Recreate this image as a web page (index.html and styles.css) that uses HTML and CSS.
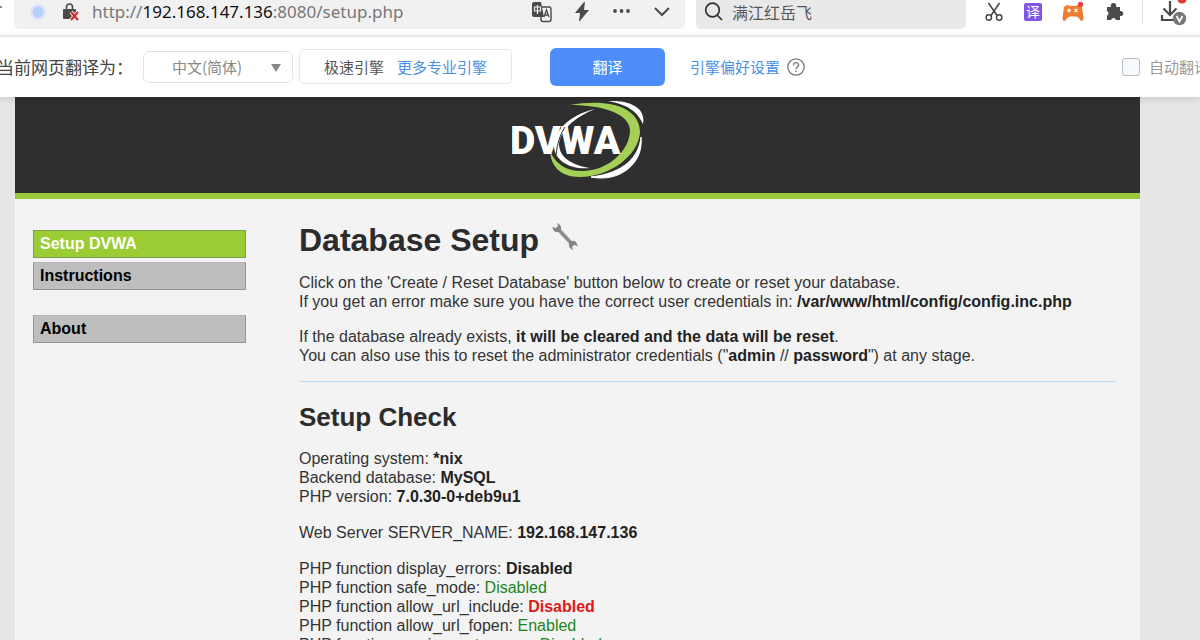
FILE: index.html
```html
<!DOCTYPE html>
<html lang="en">
<head>
    <meta charset="UTF-8">
    <meta name="viewport" content="width=device-width, initial-scale=1.0">
    <title>Setup :: Damn Vulnerable Web Application (DVWA)</title>
    <link rel="stylesheet" href="styles.css">
</head>
<body>
    <div class="toolbar">
        <svg class="edge-mark" width="3" height="28" viewBox="0 0 3 28"><path d="M0 7h2" stroke="#666" stroke-width="1.4"/></svg>
        <div class="address-bar">
            <svg width="18" height="18" viewBox="0 0 18 18"><circle cx="9" cy="9" r="8" fill="#dbe5f7"/><circle cx="9" cy="9" r="5.5" fill="#b5d0fb"/></svg>
            <svg class="lock" width="18" height="18" viewBox="0 0 18 18">
                <path d="M4.5 8V4a3 3 0 0 1 6 0v4" fill="none" stroke="#4a4a4a" stroke-width="1.6"/>
                <rect x="1" y="6" width="13" height="10" rx="1" fill="#4a4a4a"/>
                <path d="M9 9l7 8M16 9l-7 8" stroke="#f1f1f1" stroke-width="4"/>
                <path d="M9 9l7 8M16 9l-7 8" stroke="#d3302a" stroke-width="2.2"/>
            </svg>
            <div class="url">http://<span>192.168.147.136</span>:8080/setup.php</div>
            <div class="address-icons">
                <svg width="22" height="22" viewBox="0 0 22 22">
                    <rect x="10" y="6" width="10" height="14.5" rx="2" fill="none" stroke="#4a4a4a" stroke-width="1.4"/>
                    <path d="M3 1h7l3 15H3a2 2 0 0 1-2-2V3a2 2 0 0 1 2-2z" fill="#4a4a4a"/>
                    <path d="M3.5 6h6v4h-6zM6.5 4v9" fill="none" stroke="#f1f1f1" stroke-width="1.2"/>
                    <path d="M13 16l2.5-7 2.5 7M14 14h3" fill="none" stroke="#4a4a4a" stroke-width="1.3"/>
                </svg>
                <svg width="22" height="22" viewBox="0 0 22 22"><path d="M13 1L4 12h5L8 21l10-12h-5l1-8z" fill="#4a4a4a"/></svg>
                <svg width="22" height="22" viewBox="0 0 22 22" fill="#4a4a4a"><circle cx="4" cy="10" r="1.9"/><circle cx="10.5" cy="10" r="1.9"/><circle cx="17" cy="10" r="1.9"/></svg>
                <svg width="22" height="22" viewBox="0 0 22 22"><path d="M4 7l7 7 7-7" fill="none" stroke="#4a4a4a" stroke-width="2"/></svg>
            </div>
        </div>
        <div class="search-bar">
            <svg width="20" height="20" viewBox="0 0 20 20" fill="none" stroke="#333" stroke-width="1.7"><circle cx="8.5" cy="8" r="6.8"/><path d="M13 13l5 5"/></svg>
            <input type="text" value="满江红岳飞" aria-label="Search">
        </div>
        <div class="extensions">
            <svg width="20" height="20" viewBox="0 0 20 20" fill="none" stroke="#444" stroke-width="1.5"><path d="M4.5 1L13 13.5M15.5 1L7 13.5"/><circle cx="4.8" cy="15.500" r="2.7"/><circle cx="15.2" cy="15.5" r="2.7"/></svg>
            <span class="fanyi">译</span>
            <svg width="22" height="22" viewBox="0 0 22 22">
                <path d="M5 4q6 2 12 0l3 2 1.500 11q0 4-3 2.500-2-4-5-4H8.500q-3 0-5 4-3 1.500-3-2.500L2 6z" fill="#f07c31"/>
                <path d="M5 9.500h4M7 7.500v4M12.500 8l3 3M15.500 8l-3 3" stroke="#fff" stroke-width="1.3"/>
                <circle cx="18.5" cy="3.5" r="2.7" fill="#e8443c"/>
            </svg>
            <svg width="20" height="20" viewBox="0 0 20 20"><path d="M3 5h4a2.800 2.800 0 1 1 5 0h4v4a2.600 2.600 0 1 1 0 5v4h-4a2.600 2.600 0 0 0-5 0H3v-4.500a2.400 2.400 0 0 0-2-4.500h2z" fill="#4a4a4a"/></svg>
        </div>
        <svg class="download" width="30" height="28" viewBox="0 0 30 28">
            <circle cx="22" cy="-1" r="4.5" fill="#e03a3e"/>
            <path d="M10 1v14M3.500 8.500l6.500 6.500 6.500-6.500M2 15v5h13" fill="none" stroke="#4a4a4a" stroke-width="2.200"/>
            <circle cx="19.5" cy="18.5" r="6.7" fill="#777"/>
            <path d="M16.5 16l3 5.500 3-5.500" fill="none" stroke="#fff" stroke-width="1.7"/>
        </svg>
    </div>

    <div class="translate-bar">
        <label class="translate-label" for="lang">当前网页翻译为：</label>
        <div class="select-box">
            <select id="lang">
                <option>中文(简体)</option>
            </select>
        </div>
        <div class="engine">
            <span>极速引擎</span>
            <a href="#">更多专业引擎</a>
        </div>
        <button type="button" class="translate-btn">翻译</button>
        <a href="#" class="prefs">引擎偏好设置</a>
        <svg width="18" height="18" viewBox="0 0 18 18" fill="none" stroke="#777" stroke-width="1.3"><circle cx="9" cy="9" r="8.2"/><path d="M6.5 7.200a2.500 2.500 0 1 1 3.700 2.100q-1.200.7-1.200 1.900M9 12.500v1.500"/></svg>
        <div class="auto">
            <input type="checkbox" id="auto">
            <label for="auto">自动翻译</label>
        </div>
    </div>

    <div class="page">
        <div class="container">
            <div class="header">
                <svg width="132" height="80" viewBox="0 0 132 80">
                    <path d="M58 4C96-3 128 6 128 31C127 54 98 76 68 76C48 76 39 65 38 50C44 64 56 71 72 70C96 69 118 50 118 29C117 13 92 4 58 4z" fill="#a5d058"/>
                    <path d="M96 0C120-1 134 8 131 23C125 10 116 4 96 0z" fill="#fff"/>
                    <path d="M129 36C127 56 112 72 79 76C108 82 132 62 129 36z" fill="#fff" stroke="#fff"/>
                    <path d="M83 8C57 14 42 30 42 46C43 60 59 69 78 67C60 64 48 57 47 44C48 30 61 17 83 8z" fill="#fff"/>
                    <text x="-2" y="53" class="logo-text">DVWA</text>
                    <path d="M53 26Q46 36 44 54" fill="none" stroke="#2f2f2f"/>
                </svg>
            </div>
            <div class="content">
                <div class="menu">
                    <ul>
                        <li class="selected"><a href="#">Setup DVWA</a></li>
                        <li><a href="#">Instructions</a></li>
                    </ul>
                    <ul>
                        <li><a href="#">About</a></li>
                    </ul>
                </div>
                <div class="main">
                    <h1>Database Setup
                        <svg width="28" height="28" viewBox="0 0 28 28"><path d="M7 7l14 15" stroke="#8c8c8c" stroke-width="3.5"/><path d="M6 1q5 2 4 7-3 4-7 1L1 5l4 1 2-2zM22 28q-5-2-4-7 3-4 7-1l2 4-4-1-2 2z" fill="#858585"/></svg>
                    </h1>
                    <p>Click on the 'Create / Reset Database' button below to create or reset your database.<br>
                    If you get an error make sure you have the correct user credentials in: <b>/var/www/html/config/config.inc.php</b></p>
                    <p>If the database already exists, <b>it will be cleared and the data will be reset</b>.<br>
                    You can also use this to reset the administrator credentials ("<b>admin</b> // <b>password</b>") at any stage.</p>
                    <hr>
                    <h2>Setup Check</h2>
                    <div class="checks">
                        <p>Operating system: <b>*nix</b><br>
                        Backend database: <b>MySQL</b><br>
                        PHP version: <b>7.0.30-0+deb9u1</b></p>
                        <p>Web Server SERVER_NAME: <b>192.168.147.136</b></p>
                        <p>PHP function display_errors: <b>Disabled</b><br>
                        PHP function safe_mode: <span class="success">Disabled</span><br>
                        PHP function allow_url_include: <span class="failure">Disabled</span><br>
                        PHP function allow_url_fopen: <span class="success">Enabled</span><br>
                        PHP function magic_quotes_gpc: <span class="success">Disabled</span></p>
                    </div>
                </div>
            </div>
        </div>
    </div>
</body>
</html>
```

FILE: styles.css
```css
* {
    box-sizing: border-box;
}
body {
    margin: 0;
    height: 100vh;
    display: flex;
    flex-direction: column;
    overflow: hidden;
    background: #fff;
    font-family: "Liberation Sans", "Noto Sans CJK SC", sans-serif;
}
svg {
    display: block;
    flex: none;
}
a {
    text-decoration: none;
}

/* browser toolbar */
.toolbar {
    display: flex;
    flex: none;
    height: 37px;
    border-bottom: 2px solid #f1f1f1;
}
.edge-mark {
    margin-right: 11px;
}
.address-bar {
    flex: 1;
    display: flex;
    align-items: center;
    height: 29px;
    padding: 0 12px 5px 15px;
    background: #f1f1f1;
    border-radius: 0 0 5px 5px;
}
.lock {
    margin: 0 12px 0 15px;
}
.url {
    flex: 1;
    font-family: "Noto Sans", "Open Sans", sans-serif;
    font-size: 17px;
    line-height: 24px;
    color: #777;
}
.url span {
    color: #111;
}
.address-icons {
    display: flex;
    gap: 18px;
}
.search-bar {
    display: flex;
    align-items: center;
    gap: 8px;
    width: 270px;
    height: 29px;
    margin-left: 11px;
    padding: 0 8px 5px;
    background: #e9e9e9;
    border-radius: 0 0 5px 5px;
}
.search-bar input {
    flex: 1;
    min-width: 0;
    padding: 0;
    border: none;
    background: none;
    color: #555;
    font-family: "Noto Sans CJK SC", sans-serif;
    font-size: 16px;
}
.extensions {
    display: flex;
    align-items: center;
    gap: 20px;
    height: 24px;
    margin-left: 18px;
    padding-right: 18px;
    border-right: 1px solid #ddd;
}
.fanyi {
    width: 18px;
    height: 18px;
    border-radius: 2px;
    background: #8155e8;
    color: #fff;
    font-size: 14px;
    line-height: 18px;
    text-align: center;
}
.download {
    margin: 0 10px 0 17px;
}

/* translate bar */
.translate-bar {
    position: relative;
    z-index: 1;
    display: flex;
    flex: none;
    align-items: center;
    height: 60px;
    margin-left: -3px;
    padding-bottom: 1px;
    background: #fff;
    font-family: "Noto Sans CJK SC", sans-serif;
    font-size: 15px;
    white-space: nowrap;
    box-shadow: 0 1px 8px rgba(0, 0, 0, 0.15);
}
.translate-label {
    width: 146px;
    font-size: 17px;
    color: #444;
}
.select-box {
    position: relative;
}
.select-box::after {
    content: "";
    position: absolute;
    right: 12px;
    top: 13px;
    border: 5px solid transparent;
    border-top: 8px solid #888;
    border-bottom: none;
    pointer-events: none;
}
.select-box select {
    appearance: none;
    width: 150px;
    height: 32px;
    padding: 0 28px;
    border: 1px solid #e2e2e2;
    border-radius: 6px;
    background: #fff;
    color: #888;
    font-family: inherit;
    font-size: 15px;
}
.engine {
    display: flex;
    align-items: center;
    gap: 13px;
    height: 35px;
    margin-left: 6px;
    padding: 0 24px;
    border: 1px solid #e8e8e8;
    border-radius: 5px;
    color: #555;
}
.translate-bar a {
    color: #4a90e8;
}
.translate-btn {
    width: 115px;
    height: 38px;
    margin-left: 38px;
    border: none;
    border-radius: 6px;
    background: #4d8efa;
    color: #fff;
    font-family: inherit;
    font-size: 15px;
}
.prefs {
    margin: 0 7px 0 25px;
}
.auto {
    display: flex;
    align-items: center;
    gap: 9px;
    margin: 0 -9px 0 auto;
    color: #999;
}
.auto input {
    appearance: none;
    width: 18px;
    height: 18px;
    margin: 0;
    border: 1px solid #bbb;
    border-radius: 3px;
    background: #f6f9fd;
}

/* page */
.page {
    flex: 1;
    min-height: 0;
    overflow: hidden;
    padding: 0 60px 0 15px;
    background: #e6e6e6;
}
.container {
    min-height: 100%;
    background: #f3f3f3;
}
.header {
    display: flex;
    justify-content: center;
    height: 102px;
    padding-top: 4px;
    background: #2f2f2f;
    border-bottom: 6px solid #9ac93c;
}
.logo-text {
    font-family: Roboto, sans-serif;
    font-size: 39px;
    font-weight: 900;
    fill: #fff;
}
.content {
    display: flex;
    gap: 53px;
    padding: 0 24px 0 18px;
    color: #333;
    font-size: 16px;
    line-height: 19px;
}
.menu {
    flex: none;
    width: 213px;
    padding-top: 31px;
}
.menu ul {
    list-style: none;
    margin: 0 0 25px;
    padding: 0;
    display: flex;
    flex-direction: column;
    gap: 4px;
}
.menu li {
    padding: 4px 6px;
    border: 1px solid #8f93a0;
    border-top-color: #b5b5b5;
    background: #bebebe;
    font-weight: bold;
    line-height: 18px;
}
.menu li a {
    color: #000;
}
.menu .selected {
    border-color: #7d9c58;
    background: #9acc33;
}
.menu .selected a {
    color: #fff;
}
.main {
    flex: 1;
    min-width: 0;
}
h1, h2 {
    color: #2c2c2c;
}
h1 {
    display: flex;
    gap: 12px;
    margin: 23px 0 14px;
    font-size: 32px;
    line-height: 37px;
}
h2 {
    margin: 20px 0 17px;
    font-size: 26px;
    line-height: 30px;
}
.main p {
    margin: 0 0 16px;
}
.main .checks p {
    margin-bottom: 17px;
}
.main b {
    color: #222;
}
hr {
    margin: 0;
    border: none;
    border-top: 1px solid #b8dcf8;
}
.success {
    color: #1c861c;
}
.failure {
    color: #e01818;
    font-weight: bold;
}
```
